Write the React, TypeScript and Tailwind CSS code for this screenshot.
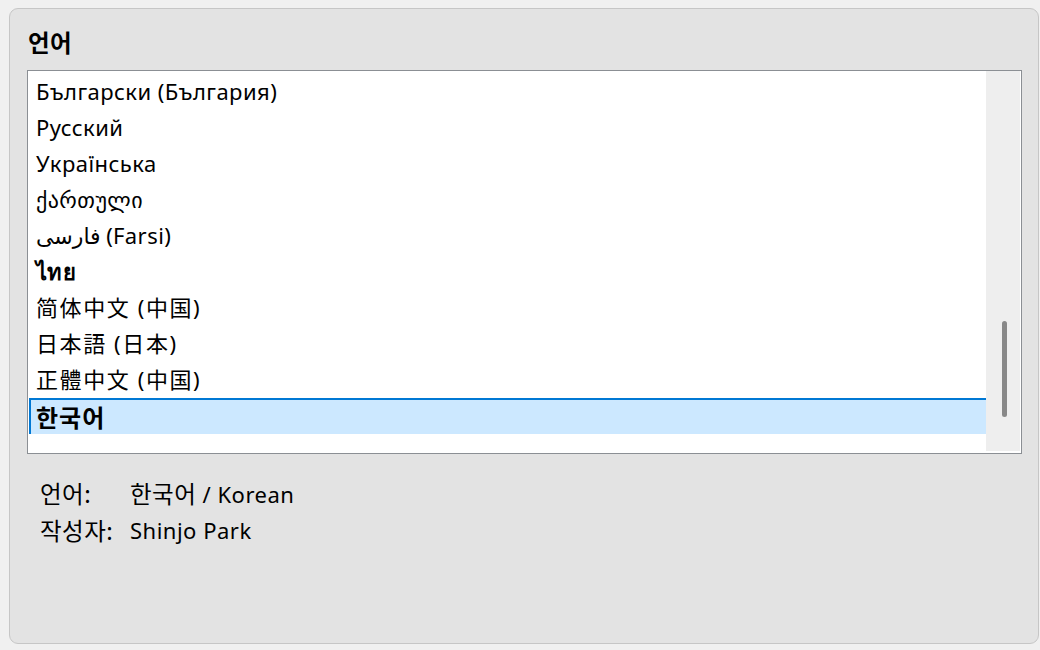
import React from "react";

const items: { label: string; bold?: boolean; cjk?: boolean }[] = [
  { label: "Български (България)" },
  { label: "Русский" },
  { label: "Українська" },
  { label: "ქართული" },
  { label: "فارسی (Farsi)" },
  { label: "ไทย", bold: true },
  { label: "简体中文 (中国)", cjk: true },
  { label: "日本語 (日本)", cjk: true },
  { label: "正體中文 (中国)", cjk: true },
];

const kr = { fontFamily: '"Noto Sans CJK KR", sans-serif' };

export default function App() {
  return (
    <div
      className="w-[1040px] h-[650px] bg-[#f0f0f0] pt-[8px] pl-[9px] pr-[1px] pb-[6px] text-black"
      style={{ fontFamily: '"Noto Sans", "DejaVu Sans", "Noto Sans CJK KR", sans-serif' }}
    >
      <div className="h-full rounded-[9px] border border-[#c6c6c6] bg-[#e3e3e3] pl-[17px] pr-[16px] pt-[18px] flex flex-col">
        <div className="text-[23.5px] font-bold leading-[30px] h-[43px] pl-[1px] tracking-[0.5px]" style={kr}>
          언어
        </div>
        <div className="h-[384px] border border-[#8b8f94] bg-white flex">
          <div className="flex-1 pt-[3px] pl-[1px]">
            {items.map((it) => (
              <div
                key={it.label}
                className={`h-[36px] flex items-center pl-[7px] pb-[3px] text-[22px] leading-none ${it.bold ? "font-bold" : ""} ${it.cjk ? "tracking-[1.6px]" : "tracking-[0.45px]"}`}
              >
                {it.label}
              </div>
            ))}
            <div className="h-[36px] flex items-center pl-[5px] pb-[1px] text-[24px] tracking-[1px] font-bold bg-[#cce8ff] border-l-2 border-t-2 border-[#0078d4] leading-none" style={kr}>
              한국어
            </div>
          </div>
          <div className="w-[34px] bg-[#eeeeee] mb-[2px] mr-[1px] flex flex-col items-center">
            <div className="h-[250px]" />
            <div className="w-[5px] h-[96px] rounded-full bg-[#888888] ml-[2px]" />
          </div>
        </div>
        <div className="mt-[21px] pl-[13px] text-[22px] leading-[36px] tracking-[0.5px]">
          <div className="flex">
            <span className="w-[90px] text-[23.5px]" style={kr}>언어:</span>
            <span>
              <span className="text-[23.5px]" style={kr}>한국어</span> / Korean
            </span>
          </div>
          <div className="flex">
            <span className="w-[90px] text-[23.5px]" style={kr}>작성자:</span>
            <span>Shinjo Park</span>
          </div>
        </div>
      </div>
    </div>
  );
}
